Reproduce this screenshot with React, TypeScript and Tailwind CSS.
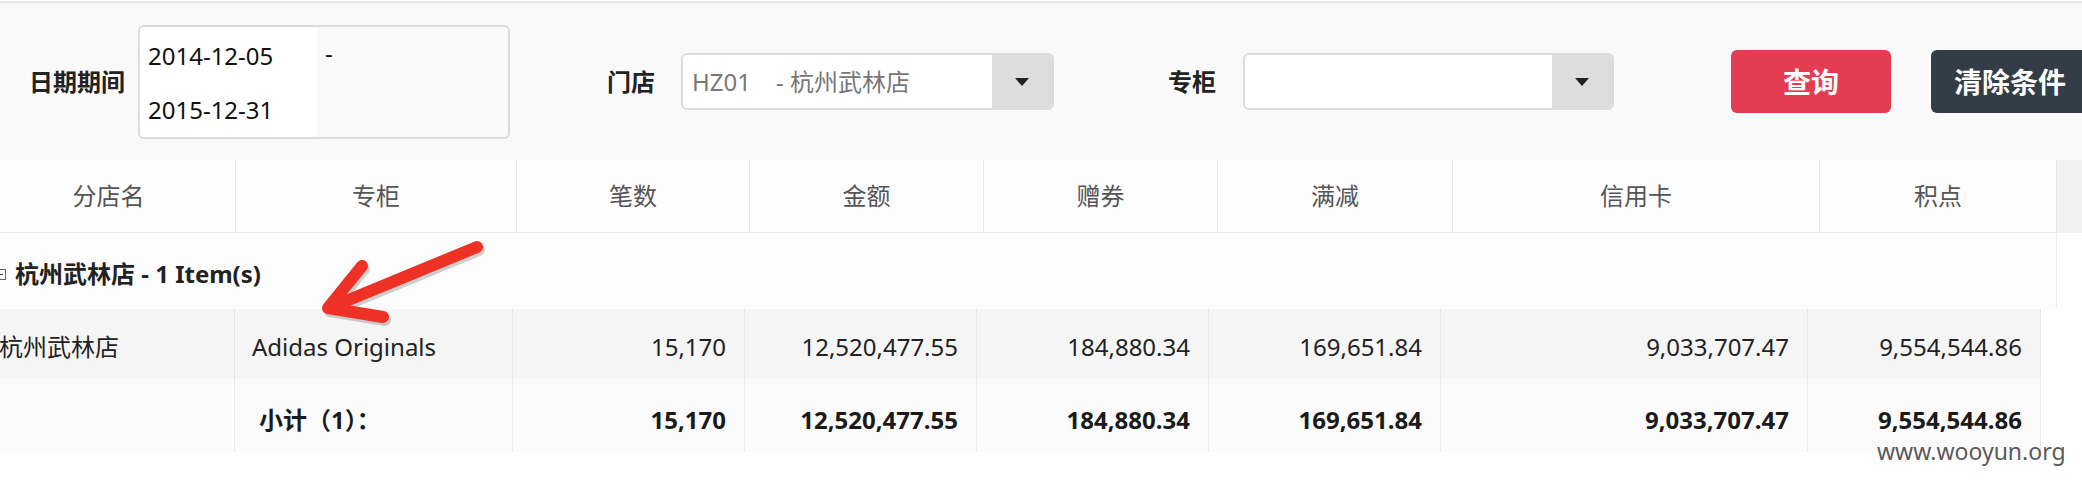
import React from "react";

const headW = [254, 281, 233, 234, 234, 235, 367, 237];
const bodyW = [253, 278, 232, 232, 232, 232, 367, 233];
const heads = ["分店名", "专柜", "笔数", "金额", "赠券", "满减", "信用卡", "积点"];
const dataRow = ["杭州武林店", "Adidas Originals", "15,170", "12,520,477.55", "184,880.34", "169,651.84", "9,033,707.47", "9,554,544.86"];
const subRow = ["", "小计（1）：", "15,170", "12,520,477.55", "184,880.34", "169,651.84", "9,033,707.47", "9,554,544.86"];

function Select({ text, width }: { text?: string; width: number }) {
  return (
    <div
      className="flex shrink-0 h-[57px] rounded-[6px] border-2 border-[#dcdcdc] bg-white overflow-hidden"
      style={{ width }}
    >
      <div className="flex-1 flex items-center pl-[9px] text-[24px] leading-[30px] text-[#777] whitespace-pre">
        {text}
      </div>
      <div className="w-[60px] bg-[#dddddd] flex items-center justify-center">
        <svg width="16" height="10" viewBox="0 0 16 10">
          <path d="M1 1 H15 L8 9 Z" fill="#222" />
        </svg>
      </div>
    </div>
  );
}

export default function App() {
  return (
    <div
      className="relative w-[2082px] h-[480px] bg-white overflow-hidden text-[#222]"
      style={{ fontFamily: '"Noto Sans", "Noto Sans CJK SC", sans-serif' }}
    >
      <div className="h-[1px] bg-white" />
      <div className="h-[2px] bg-[#e6e6e6]" />
      {/* filter bar */}
      <div className="h-[157px] bg-[#f9f9f9] flex items-center pl-[29px]">
        <div className="w-[96px] shrink-0 whitespace-nowrap text-[24px] leading-[30px] font-bold">日期期间</div>
        <div className="ml-[13px] shrink-0 w-[372px] h-[114px] rounded-[6px] border-2 border-[#dcdcdc] bg-[#fafafa] flex">
          <div className="w-[177px] bg-white flex flex-col pt-[2px] rounded-l-[4px]">
            <div className="h-[55px] flex items-center pl-[8px] text-[24px] leading-[30px] text-[#111]">2014-12-05</div>
            <div className="h-[55px] flex items-center pl-[8px] text-[24px] leading-[30px] text-[#111]">2015-12-31</div>
          </div>
          <div className="h-[52px] flex items-center pl-[8px] text-[24px] leading-[30px] text-[#111]">-</div>
        </div>
        <div className="ml-[97px] w-[48px] shrink-0 whitespace-nowrap text-[24px] leading-[30px] font-bold">门店</div>
        <div className="ml-[26px] shrink-0">
          <Select width={373} text={"HZ01    - 杭州武林店"} />
        </div>
        <div className="ml-[114px] w-[48px] shrink-0 whitespace-nowrap text-[24px] leading-[30px] font-bold">专柜</div>
        <div className="ml-[27px] shrink-0">
          <Select width={371} />
        </div>
        <button className="ml-[117px] shrink-0 w-[160px] h-[63px] rounded-[6px] bg-[#e43d51] text-white text-[28px] leading-[34px] font-bold flex items-center justify-center">
          查询
        </button>
        <button className="ml-[40px] w-[160px] h-[63px] shrink-0 whitespace-nowrap rounded-[6px] bg-[#323d48] text-white text-[28px] leading-[34px] font-bold flex items-center pl-[23px]">
          清除条件
        </button>
      </div>

      {/* table */}
      <div className="ml-[-18px]">
        {/* header */}
        <div className="flex h-[73px]">
          {heads.map((h, i) => (
            <div
              key={i}
              className="h-full bg-[#fcfcfc] border-r border-b border-[#e8e8e8] flex items-center justify-center text-[24px] leading-[30px] text-[#555] shrink-0"
              style={{ width: headW[i] }}
            >
              {h}
            </div>
          ))}
          <div className="flex-1 h-full bg-[#f2f2f2]" />
        </div>
        {/* group row */}
        <div className="flex h-[76px]">
          <div className="w-[2075px] shrink-0 h-full bg-[#fcfcfc] border-r border-[#ececec] flex items-center pt-[6px] pl-[13px]">
            <div className="relative w-[11px] h-[11px] border border-[#666] mr-[9px]">
              <div className="absolute left-[2px] right-[2px] top-[4px] h-[1px] bg-[#444]" />
            </div>
            <span className="text-[24px] leading-[30px] font-bold text-[#222] whitespace-nowrap">杭州武林店 - 1 Item(s)</span>
          </div>
        </div>
        {/* data row */}
        <div className="flex h-[70px]">
          {dataRow.map((t, i) => (
            <div
              key={i}
              className={
                "h-full bg-[#f5f5f5] border-r border-[#e6e6e6] flex items-center pt-[5px] text-[24px] leading-[30px] text-[#222] shrink-0 whitespace-nowrap " +
                (i < 2 ? "pl-[17px]" : "justify-end pr-[18px]")
              }
              style={{ width: bodyW[i] }}
            >
              {t}
            </div>
          ))}
        </div>
        {/* subtotal row */}
        <div className="flex h-[73px]">
          {subRow.map((t, i) => (
            <div
              key={i}
              className={
                "h-full bg-[#fbfbfb] border-r border-[#ececec] flex items-center pt-[8px] text-[24px] leading-[30px] font-bold text-[#1a1a1a] shrink-0 whitespace-nowrap " +
                (i < 2 ? "pl-[24px]" : "justify-end pr-[18px]")
              }
              style={{ width: bodyW[i] }}
            >
              {t}
            </div>
          ))}
        </div>
      </div>

      {/* watermark */}
      <div className="absolute left-[1877px] top-[436px] text-[23px] leading-[30px] text-[#5a5a5a] whitespace-nowrap">
        www.wooyun.org
      </div>

      {/* red annotation arrow */}
      <svg
        className="absolute left-[300px] top-[230px] pointer-events-none"
        width="200"
        height="100"
        viewBox="0 0 200 100"
      >
        <g stroke="rgba(0,0,0,0.18)" strokeWidth="12" strokeLinecap="round" strokeLinejoin="round" fill="none" transform="translate(2 3)">
          <path d="M177 17 L34 76" />
          <path d="M62 36 L28 78 L83 87" />
        </g>
        <g stroke="#ee3124" strokeWidth="12" strokeLinecap="round" strokeLinejoin="round" fill="none">
          <path d="M177 17 L34 76" />
          <path d="M62 36 L28 78 L83 87" />
        </g>
      </svg>
    </div>
  );
}
